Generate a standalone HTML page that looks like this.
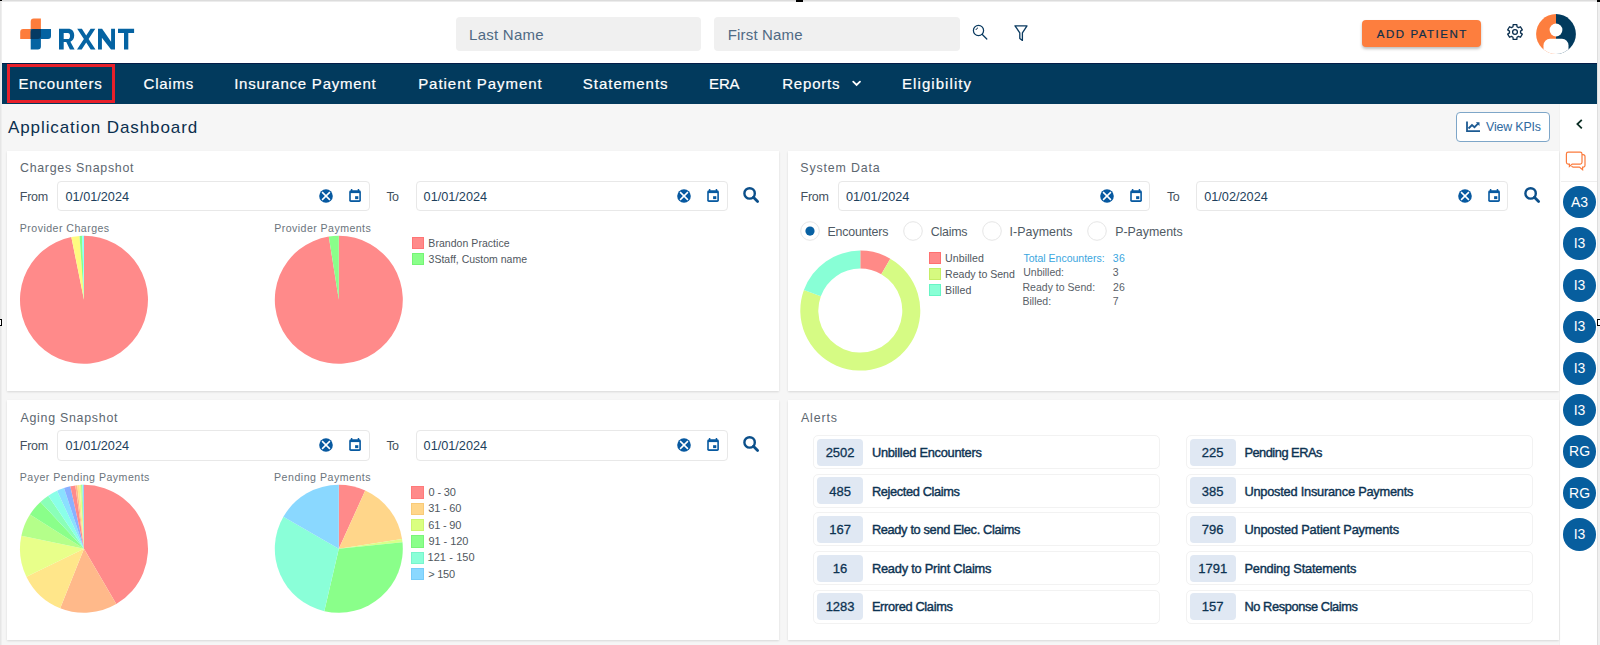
<!DOCTYPE html><html><head><meta charset="utf-8"><style>
html,body{margin:0;padding:0;width:1600px;height:645px;overflow:hidden;background:#f6f6f6;font-family:"Liberation Sans",sans-serif;}
.t{position:absolute;white-space:nowrap;}
</style></head><body>
<div style="position:absolute;left:0px;top:0px;width:1600px;height:63px;background:#fff"></div>
<div style="position:absolute;left:2px;top:63px;width:1595px;height:41px;background:#023a5d"></div>
<div style="position:absolute;left:2px;top:63px;width:1595px;height:1px;background:#031c48"></div>
<div style="position:absolute;left:1559px;top:104px;width:38px;height:541px;background:#fff;border-left:1px solid #f2f2f2;box-sizing:border-box"></div>
<div style="position:absolute;left:0px;top:0px;width:1600px;height:1px;background:#dcdcdc"></div>
<div style="position:absolute;left:0px;top:1px;width:1600px;height:1px;background:#ececec"></div>
<div style="position:absolute;left:0px;top:0px;width:1px;height:645px;background:#e6e6e6"></div>
<div style="position:absolute;left:1px;top:0px;width:1px;height:645px;background:#eeeeee"></div>
<div style="position:absolute;left:1597px;top:0px;width:3px;height:645px;background:#efefef"></div>
<div style="position:absolute;left:1597px;top:0px;width:1px;height:645px;background:#dedede"></div>
<svg style="position:absolute;left:18px;top:16px" width="36" height="36" viewBox="0 0 36 36">
<path d="M15.7,2.5 H22.9 V23.1 H2.2 V16.1 a3,3 0 0 1 3,-3 H12.7 V5.5 a3,3 0 0 1 3,-3 z" fill="#fd7c3b"/>
<path d="M12.7,13.1 H33 V20.1 a3,3 0 0 1 -3,3 H22.9 V30.4 a3,3 0 0 1 -3,3 H12.7 z" fill="#0563a2"/>
<path d="M15.7,13.1 H22.9 V20.1 a3,3 0 0 1 -3,3 H12.7 V16.1 a3,3 0 0 1 3,-3 z" fill="#053a63"/>
</svg>
<svg style="position:absolute;left:56px;top:26px" width="82" height="26" viewBox="0 0 82 26"><path fill-rule="evenodd" fill="#0563a2" d="M3.0,2.8 H12.0 C16.0,2.8 18.2,5.4 18.2,9.6 C18.2,12.9 16.6,15.0 14.4,15.8 L18.6,23.6 H13.9 L10.3,16.1 H7.7 V23.6 H3.0 Z M7.7,7.0 V13.1 H11.9 C13.3,13.1 14.0,11.9 14.0,10.0 C14.0,8.1 13.3,7.0 11.9,7.0 Z"/><path fill="#0563a2" d="M21.2,2.8 H25.9 L30.2,9.6 L34.6,2.8 H39.3 L32.6,13.0 L39.5,23.6 H34.7 L30.2,16.6 L25.7,23.6 H21.0 L27.9,13.0 Z"/><path fill="#0563a2" d="M42,2.8 H46.1 L55.1,15.7 V2.8 H59 V23.6 H55.0 L45.9,11.7 V23.6 H42 Z"/><path fill="#0563a2" d="M62,2.8 H78.1 V6.9 H72.3 V23.6 H68 V6.9 H62 Z"/></svg>
<div style="position:absolute;left:456px;top:16.7px;width:245px;height:34.7px;background:#f0f0f0;border-radius:4px"></div>
<div style="position:absolute;left:714.2px;top:16.7px;width:245.5px;height:34.7px;background:#f0f0f0;border-radius:4px"></div>
<div class="t" style="left:469.08px;top:27.00px;font-size:15px;line-height:15px;color:#4f6a84;letter-spacing:0.250px;">Last Name</div>
<div class="t" style="left:727.72px;top:27.00px;font-size:15px;line-height:15px;color:#4f6a84;letter-spacing:0.174px;">First Name</div>
<svg style="position:absolute;left:968px;top:22px" width="22" height="22" viewBox="0 0 22 22"><circle cx="10.5" cy="8.5" r="5.1" fill="none" stroke="#0a3a60" stroke-width="1.25"/><path d="M14.3,12.5 L18.8,17" stroke="#0a3a60" stroke-width="1.25" stroke-linecap="round"/><path d="M8,7.6 A2.6,2.6 0 0 1 9.6,6" stroke="#0b2f4e" stroke-width="1" fill="none" stroke-linecap="round"/></svg>
<svg style="position:absolute;left:1010px;top:22px" width="22" height="22" viewBox="0 0 22 22"><path d="M5,3.8 h12 l-4.6,7 v7.6 l-2.6,-2 v-5.6 z" fill="none" stroke="#0a3a60" stroke-width="1.3" stroke-linejoin="round"/></svg>
<div style="position:absolute;left:1362.2px;top:20.3px;width:118.7px;height:26.9px;background:#fd7e3e;border-radius:4px;box-shadow:0 2px 3px rgba(0,0,0,0.25)"></div>
<div class="t" style="left:1376.84px;top:29.00px;font-size:11.5px;line-height:11.5px;color:#0e2f4a;letter-spacing:1.519px;-webkit-text-stroke:0.2px #0e2f4a;">ADD PATIENT</div>
<svg style="position:absolute;left:1503.7px;top:21.4px" width="22" height="22" viewBox="0 0 22 22"><path d="M9.16,3.63 L12.84,3.63 L13.01,5.77 L14.52,6.65 L16.47,5.72 L18.31,8.91 L16.53,10.12 L16.53,11.88 L18.31,13.09 L16.47,16.28 L14.52,15.35 L13.01,16.23 L12.84,18.37 L9.16,18.37 L8.99,16.23 L7.48,15.35 L5.53,16.28 L3.69,13.09 L5.47,11.88 L5.47,10.12 L3.69,8.91 L5.53,5.72 L7.48,6.65 L8.99,5.77 Z" fill="none" stroke="#0b2f4e" stroke-width="1.3" stroke-linejoin="round"/><circle cx="11" cy="11" r="2.4" fill="none" stroke="#0b2f4e" stroke-width="1.3"/></svg>
<svg style="position:absolute;left:1535.5px;top:14px" width="40" height="40" viewBox="0 0 40 40"><defs><clipPath id="av"><circle cx="20" cy="20" r="19.9"/></clipPath></defs>
<g clip-path="url(#av)"><rect x="0" y="0" width="20" height="40" fill="#fd7e3e"/><rect x="20" y="0" width="20" height="40" fill="#023a5d"/>
<circle cx="20" cy="16" r="6.4" fill="#fff"/><rect x="7.5" y="24.8" width="25" height="20" rx="6.5" fill="#fff"/></g></svg>
<div class="t" style="left:18.50px;top:76.00px;font-size:15px;line-height:15px;color:#ffffff;letter-spacing:0.822px;-webkit-text-stroke:0.2px #fff;">Encounters</div>
<div class="t" style="left:143.60px;top:76.00px;font-size:15px;line-height:15px;color:#ffffff;letter-spacing:0.740px;-webkit-text-stroke:0.2px #fff;">Claims</div>
<div class="t" style="left:234.14px;top:76.00px;font-size:15px;line-height:15px;color:#ffffff;letter-spacing:0.769px;-webkit-text-stroke:0.2px #fff;">Insurance Payment</div>
<div class="t" style="left:418.14px;top:76.00px;font-size:15px;line-height:15px;color:#ffffff;letter-spacing:0.964px;-webkit-text-stroke:0.2px #fff;">Patient Payment</div>
<div class="t" style="left:582.78px;top:76.00px;font-size:15px;line-height:15px;color:#ffffff;letter-spacing:0.989px;-webkit-text-stroke:0.2px #fff;">Statements</div>
<div class="t" style="left:709.08px;top:76.00px;font-size:15px;line-height:15px;color:#ffffff;letter-spacing:-0.200px;-webkit-text-stroke:0.2px #fff;">ERA</div>
<div class="t" style="left:782.22px;top:76.00px;font-size:15px;line-height:15px;color:#ffffff;letter-spacing:0.800px;-webkit-text-stroke:0.2px #fff;">Reports</div>
<div class="t" style="left:902.04px;top:76.00px;font-size:15px;line-height:15px;color:#ffffff;letter-spacing:1.065px;-webkit-text-stroke:0.2px #fff;">Eligibility</div>
<svg style="position:absolute;left:848px;top:76px" width="18" height="14" viewBox="0 0 18 14"><path d="M5.2,5.6 L8.6,9 L12,5.6" fill="none" stroke="#fff" stroke-width="1.8" stroke-linecap="round"/></svg>
<div style="position:absolute;left:7px;top:64.3px;width:107.8px;height:38.3px;border:3px solid #e8202a;box-sizing:border-box"></div>
<div class="t" style="left:8.00px;top:119.00px;font-size:17px;line-height:17px;color:#0b2f4e;letter-spacing:0.908px;">Application Dashboard</div>
<div style="position:absolute;left:1456.1px;top:112.4px;width:94.3px;height:29.2px;background:#fff;border:1px solid #7ea6c8;border-radius:4px;box-sizing:border-box"></div>
<svg style="position:absolute;left:1464px;top:119px" width="18" height="15" viewBox="0 0 18 15"><path d="M3,2.5 V12.2 H16" fill="none" stroke="#1c5a92" stroke-width="1.8"/><path d="M4.5,9.5 L8,6 L10.5,8.2 L14.5,4.2" fill="none" stroke="#1c5a92" stroke-width="1.8"/><path d="M11.8,3.2 H15.5 V6.9 Z" fill="#1c5a92"/></svg>
<div class="t" style="left:1486.08px;top:121.00px;font-size:12.4px;line-height:12.4px;color:#2f6aa0;letter-spacing:-0.162px;">View KPIs</div>
<svg style="position:absolute;left:1572px;top:116px" width="14" height="16" viewBox="0 0 14 16"><path d="M9.8,3.8 L5.4,8.1 L9.8,12.4" fill="none" stroke="#0d2f25" stroke-width="1.8"/></svg>
<svg style="position:absolute;left:1563px;top:149px" width="26" height="25" viewBox="0 0 26 25"><path d="M5.2,3.2 h12 a1.8,1.8 0 0 1 1.8,1.8 v8.3 a1.8,1.8 0 0 1 -1.8,1.8 h-8 l-2.8,2.4 v-2.4 h-1.2 a1.8,1.8 0 0 1 -1.8,-1.8 v-8.3 a1.8,1.8 0 0 1 1.8,-1.8 z" fill="none" stroke="#fb7b3d" stroke-width="1.2"/><path d="M19,5.7 h1.2 a1.8,1.8 0 0 1 1.8,1.8 v8.8 a1.8,1.8 0 0 1 -1.8,1.8 h-0.6 v2.6 l-3.2,-2.6 h-6.2 a1.8,1.8 0 0 1 -1.6,-1.1" fill="none" stroke="#fb7b3d" stroke-width="1.2"/></svg>
<div style="position:absolute;left:1561px;top:180.5px;width:36px;height:1px;background:#eeeeee"></div>
<div style="position:absolute;left:1563.3px;top:185.85px;width:32.5px;height:32.5px;background:#075e9e;border-radius:50%"></div>
<div class="t" style="left:1563.3px;width:32.5px;text-align:center;top:194.6px;font-size:14px;line-height:15px;color:#fff">A3</div>
<div style="position:absolute;left:1563.3px;top:227.43px;width:32.5px;height:32.5px;background:#075e9e;border-radius:50%"></div>
<div class="t" style="left:1563.3px;width:32.5px;text-align:center;top:236.2px;font-size:14px;line-height:15px;color:#fff">I3</div>
<div style="position:absolute;left:1563.3px;top:269.01px;width:32.5px;height:32.5px;background:#075e9e;border-radius:50%"></div>
<div class="t" style="left:1563.3px;width:32.5px;text-align:center;top:277.8px;font-size:14px;line-height:15px;color:#fff">I3</div>
<div style="position:absolute;left:1563.3px;top:310.59px;width:32.5px;height:32.5px;background:#075e9e;border-radius:50%"></div>
<div class="t" style="left:1563.3px;width:32.5px;text-align:center;top:319.3px;font-size:14px;line-height:15px;color:#fff">I3</div>
<div style="position:absolute;left:1563.3px;top:352.17px;width:32.5px;height:32.5px;background:#075e9e;border-radius:50%"></div>
<div class="t" style="left:1563.3px;width:32.5px;text-align:center;top:360.9px;font-size:14px;line-height:15px;color:#fff">I3</div>
<div style="position:absolute;left:1563.3px;top:393.75px;width:32.5px;height:32.5px;background:#075e9e;border-radius:50%"></div>
<div class="t" style="left:1563.3px;width:32.5px;text-align:center;top:402.5px;font-size:14px;line-height:15px;color:#fff">I3</div>
<div style="position:absolute;left:1563.3px;top:435.33px;width:32.5px;height:32.5px;background:#075e9e;border-radius:50%"></div>
<div class="t" style="left:1563.3px;width:32.5px;text-align:center;top:444.1px;font-size:14px;line-height:15px;color:#fff">RG</div>
<div style="position:absolute;left:1563.3px;top:476.91px;width:32.5px;height:32.5px;background:#075e9e;border-radius:50%"></div>
<div class="t" style="left:1563.3px;width:32.5px;text-align:center;top:485.7px;font-size:14px;line-height:15px;color:#fff">RG</div>
<div style="position:absolute;left:1563.3px;top:518.49px;width:32.5px;height:32.5px;background:#075e9e;border-radius:50%"></div>
<div class="t" style="left:1563.3px;width:32.5px;text-align:center;top:527.2px;font-size:14px;line-height:15px;color:#fff">I3</div>
<div style="position:absolute;left:796px;top:0px;width:7px;height:2px;background:#000"></div>
<div style="position:absolute;left:0px;top:0px;width:2px;height:1px;background:#000"></div>
<div style="position:absolute;left:1597px;top:0px;width:3px;height:2px;background:#000"></div>
<div style="position:absolute;left:0px;top:319px;width:2px;height:7px;border:1px solid #000;border-left:none;background:#fff;box-sizing:border-box"></div>
<div style="position:absolute;left:1597px;top:319px;width:3px;height:7px;border:1.5px solid #000;border-right:none;background:#fff;box-sizing:border-box"></div>
<div style="position:absolute;left:6.8px;top:150.7px;width:772.3px;height:240.6px;background:#fff;box-shadow:0 1px 2px rgba(0,0,0,0.12)"></div>
<div style="position:absolute;left:787.8px;top:150.7px;width:770.8px;height:240.6px;background:#fff;box-shadow:0 1px 2px rgba(0,0,0,0.12)"></div>
<div style="position:absolute;left:6.8px;top:400px;width:772.3px;height:240px;background:#fff;box-shadow:0 1px 2px rgba(0,0,0,0.12)"></div>
<div style="position:absolute;left:787.8px;top:400px;width:770.8px;height:240px;background:#fff;box-shadow:0 1px 2px rgba(0,0,0,0.12)"></div>
<div class="t" style="left:19.98px;top:162.00px;font-size:12.4px;line-height:12.4px;color:#5d6770;letter-spacing:0.725px;">Charges Snapshot</div>
<div class="t" style="left:19.78px;top:191.00px;font-size:12.5px;line-height:12.5px;color:#44515e;letter-spacing:-0.242px;">From</div>
<div style="position:absolute;left:57.4px;top:181.1px;width:312.2px;height:29.7px;border:1px solid #e8e8e8;border-radius:4px;box-sizing:border-box;background:#fff"></div>
<div class="t" style="left:65.52px;top:191.00px;font-size:12.7px;line-height:12.7px;color:#1e3f5c;letter-spacing:-0.002px;">01/01/2024</div>
<svg style="position:absolute;left:318.1px;top:187.75px" width="16" height="16" viewBox="0 0 16 16"><circle cx="8" cy="8" r="6.8" fill="#0759a0"/><path d="M4.1,4.1 L11.9,11.9 M11.9,4.1 L4.1,11.9" stroke="#fff" stroke-width="1.5"/></svg>
<svg style="position:absolute;left:349.2px;top:188.9px" width="13" height="13" viewBox="0 0 13 13"><rect x="0.2" y="1.3" width="11.7" height="11.6" rx="1.6" fill="#0759a0"/><rect x="1.8" y="4.1" width="8.5" height="7.1" fill="#fff"/><rect x="6.1" y="7.2" width="3.2" height="2.9" fill="#0759a0"/><rect x="1.9" y="0" width="1.5" height="2" rx="0.5" fill="#0759a0"/><rect x="8.7" y="0" width="1.5" height="2" rx="0.5" fill="#0759a0"/></svg>
<div style="position:absolute;left:415.6px;top:181.1px;width:312.2px;height:29.7px;border:1px solid #e8e8e8;border-radius:4px;box-sizing:border-box;background:#fff"></div>
<div class="t" style="left:423.58px;top:191.00px;font-size:12.7px;line-height:12.7px;color:#1e3f5c;letter-spacing:-0.002px;">01/01/2024</div>
<svg style="position:absolute;left:676.3000000000001px;top:187.75px" width="16" height="16" viewBox="0 0 16 16"><circle cx="8" cy="8" r="6.8" fill="#0759a0"/><path d="M4.1,4.1 L11.9,11.9 M11.9,4.1 L4.1,11.9" stroke="#fff" stroke-width="1.5"/></svg>
<svg style="position:absolute;left:707.4000000000001px;top:188.9px" width="13" height="13" viewBox="0 0 13 13"><rect x="0.2" y="1.3" width="11.7" height="11.6" rx="1.6" fill="#0759a0"/><rect x="1.8" y="4.1" width="8.5" height="7.1" fill="#fff"/><rect x="6.1" y="7.2" width="3.2" height="2.9" fill="#0759a0"/><rect x="1.9" y="0" width="1.5" height="2" rx="0.5" fill="#0759a0"/><rect x="8.7" y="0" width="1.5" height="2" rx="0.5" fill="#0759a0"/></svg>
<div class="t" style="left:386.55px;top:191.00px;font-size:12.5px;line-height:12.5px;color:#44515e;letter-spacing:-0.800px;">To</div>
<svg style="position:absolute;left:742.4px;top:186px" width="19" height="18" viewBox="0 0 19 18"><circle cx="7.6" cy="7.4" r="5.2" fill="none" stroke="#0b4f8a" stroke-width="2.4"/><path d="M11.4,11.2 L15.6,15.4" stroke="#0b4f8a" stroke-width="2.8" stroke-linecap="round"/></svg>
<div class="t" style="left:19.80px;top:223.00px;font-size:10.6px;line-height:10.6px;color:#6b747c;letter-spacing:0.462px;">Provider Charges</div>
<div class="t" style="left:274.30px;top:223.00px;font-size:10.6px;line-height:10.6px;color:#6b747c;letter-spacing:0.433px;">Provider Payments</div>
<svg style="position:absolute;left:19px;top:235px" width="130" height="130" viewBox="0 0 130 130"><path d="M65.00,64.80 L65.00,0.80 A64,64 0 1 1 52.35,2.06 Z" fill="#ff8a8a"/><path d="M65.00,64.80 L52.35,2.06 A64,64 0 0 1 60.54,0.96 Z" fill="#fffb80"/><path d="M65.00,64.80 L60.54,0.96 A64,64 0 0 1 63.21,0.82 Z" fill="#88ff88"/><path d="M65.00,64.80 L63.21,0.82 A64,64 0 0 1 65.00,0.80 Z" fill="#88ffff"/></svg>
<svg style="position:absolute;left:274px;top:235px" width="130" height="130" viewBox="0 0 130 130"><path d="M64.80,64.80 L64.80,0.80 A64,64 0 1 1 54.79,1.59 Z" fill="#ff8a8a"/><path d="M64.80,64.80 L54.79,1.59 A64,64 0 0 1 64.80,0.80 Z" fill="#8aff8a"/></svg>
<div style="position:absolute;left:411.5px;top:237px;width:12.5px;height:12.4px;background:#ff8a8a;border:1px solid #ff7575;box-sizing:border-box"></div>
<div style="position:absolute;left:411.5px;top:252.9px;width:12.5px;height:12.4px;background:#8aff8a;border:1px solid #75f575;box-sizing:border-box"></div>
<div class="t" style="left:428.35px;top:238.00px;font-size:10.5px;line-height:10.5px;color:#50575e;letter-spacing:0.048px;">Brandon Practice</div>
<div class="t" style="left:428.55px;top:254.00px;font-size:10.5px;line-height:10.5px;color:#50575e;letter-spacing:0.001px;">3Staff, Custom name</div>
<div class="t" style="left:800.30px;top:162.00px;font-size:12.4px;line-height:12.4px;color:#5d6770;letter-spacing:0.843px;">System Data</div>
<div class="t" style="left:800.44px;top:191.00px;font-size:12.5px;line-height:12.5px;color:#44515e;letter-spacing:-0.192px;">From</div>
<div style="position:absolute;left:838.0px;top:181.1px;width:312.2px;height:29.7px;border:1px solid #e8e8e8;border-radius:4px;box-sizing:border-box;background:#fff"></div>
<div class="t" style="left:846.00px;top:191.00px;font-size:12.7px;line-height:12.7px;color:#1e3f5c;letter-spacing:-0.020px;">01/01/2024</div>
<svg style="position:absolute;left:1098.7px;top:187.75px" width="16" height="16" viewBox="0 0 16 16"><circle cx="8" cy="8" r="6.8" fill="#0759a0"/><path d="M4.1,4.1 L11.9,11.9 M11.9,4.1 L4.1,11.9" stroke="#fff" stroke-width="1.5"/></svg>
<svg style="position:absolute;left:1129.8px;top:188.9px" width="13" height="13" viewBox="0 0 13 13"><rect x="0.2" y="1.3" width="11.7" height="11.6" rx="1.6" fill="#0759a0"/><rect x="1.8" y="4.1" width="8.5" height="7.1" fill="#fff"/><rect x="6.1" y="7.2" width="3.2" height="2.9" fill="#0759a0"/><rect x="1.9" y="0" width="1.5" height="2" rx="0.5" fill="#0759a0"/><rect x="8.7" y="0" width="1.5" height="2" rx="0.5" fill="#0759a0"/></svg>
<div style="position:absolute;left:1196.2px;top:181.1px;width:312.2px;height:29.7px;border:1px solid #e8e8e8;border-radius:4px;box-sizing:border-box;background:#fff"></div>
<div class="t" style="left:1204.14px;top:191.00px;font-size:12.7px;line-height:12.7px;color:#1e3f5c;letter-spacing:0.024px;">01/02/2024</div>
<svg style="position:absolute;left:1456.9px;top:187.75px" width="16" height="16" viewBox="0 0 16 16"><circle cx="8" cy="8" r="6.8" fill="#0759a0"/><path d="M4.1,4.1 L11.9,11.9 M11.9,4.1 L4.1,11.9" stroke="#fff" stroke-width="1.5"/></svg>
<svg style="position:absolute;left:1488.0px;top:188.9px" width="13" height="13" viewBox="0 0 13 13"><rect x="0.2" y="1.3" width="11.7" height="11.6" rx="1.6" fill="#0759a0"/><rect x="1.8" y="4.1" width="8.5" height="7.1" fill="#fff"/><rect x="6.1" y="7.2" width="3.2" height="2.9" fill="#0759a0"/><rect x="1.9" y="0" width="1.5" height="2" rx="0.5" fill="#0759a0"/><rect x="8.7" y="0" width="1.5" height="2" rx="0.5" fill="#0759a0"/></svg>
<div class="t" style="left:1166.99px;top:191.00px;font-size:12.5px;line-height:12.5px;color:#44515e;letter-spacing:-0.420px;">To</div>
<svg style="position:absolute;left:1523.0px;top:186px" width="19" height="18" viewBox="0 0 19 18"><circle cx="7.6" cy="7.4" r="5.2" fill="none" stroke="#0b4f8a" stroke-width="2.4"/><path d="M11.4,11.2 L15.6,15.4" stroke="#0b4f8a" stroke-width="2.8" stroke-linecap="round"/></svg>
<svg style="position:absolute;left:798.7px;top:220px" width="22" height="22" viewBox="0 0 22 22"><circle cx="11" cy="11" r="9.3" fill="#fff" stroke="#e6e6e6" stroke-width="1"/><circle cx="11" cy="11.1" r="4.6" fill="#0861a3"/></svg>
<div class="t" style="left:827.40px;top:226.00px;font-size:12.4px;line-height:12.4px;color:#4f5a64;letter-spacing:-0.183px;">Encounters</div>
<svg style="position:absolute;left:901.7px;top:220px" width="22" height="22" viewBox="0 0 22 22"><circle cx="11" cy="11" r="9.3" fill="#fff" stroke="#e6e6e6" stroke-width="1"/></svg>
<div class="t" style="left:930.70px;top:226.00px;font-size:12.4px;line-height:12.4px;color:#4f5a64;letter-spacing:-0.209px;">Claims</div>
<svg style="position:absolute;left:981.2px;top:220px" width="22" height="22" viewBox="0 0 22 22"><circle cx="11" cy="11" r="9.3" fill="#fff" stroke="#e6e6e6" stroke-width="1"/></svg>
<div class="t" style="left:1009.60px;top:226.00px;font-size:12.4px;line-height:12.4px;color:#4f5a64;letter-spacing:0.028px;">I-Payments</div>
<svg style="position:absolute;left:1086.1px;top:220px" width="22" height="22" viewBox="0 0 22 22"><circle cx="11" cy="11" r="9.3" fill="#fff" stroke="#e6e6e6" stroke-width="1"/></svg>
<div class="t" style="left:1115.20px;top:226.00px;font-size:12.4px;line-height:12.4px;color:#4f5a64;letter-spacing:0.002px;">P-Payments</div>
<svg style="position:absolute;left:799px;top:249px" width="123" height="123" viewBox="0 0 123 123"><path d="M61.30,1.60 A60,60 0 0 1 91.30,9.64 L82.30,25.23 A42,42 0 0 0 61.30,19.60 Z" fill="#ff8a87"/><path d="M91.30,9.64 A60,60 0 1 1 4.92,41.08 L21.83,47.24 A42,42 0 1 0 82.30,25.23 Z" fill="#d6fb84"/><path d="M4.92,41.08 A60,60 0 0 1 61.30,1.60 L61.30,19.60 A42,42 0 0 0 21.83,47.24 Z" fill="#88ffd6"/></svg>
<div style="position:absolute;left:928.9px;top:252px;width:12.2px;height:12.3px;background:#ff8a8a;border:1px solid #ff7070;box-sizing:border-box"></div>
<div style="position:absolute;left:928.9px;top:268px;width:12.2px;height:12.3px;background:#d6fa80;border:1px solid #c6ee66;box-sizing:border-box"></div>
<div style="position:absolute;left:928.9px;top:284px;width:12.2px;height:12.3px;background:#88ffd5;border:1px solid #66f5c5;box-sizing:border-box"></div>
<div class="t" style="left:945.04px;top:253.00px;font-size:10.6px;line-height:10.6px;color:#50575e;letter-spacing:0.085px;">Unbilled</div>
<div class="t" style="left:945.04px;top:269.00px;font-size:10.6px;line-height:10.6px;color:#50575e;letter-spacing:-0.021px;">Ready to Send</div>
<div class="t" style="left:945.04px;top:285.00px;font-size:10.6px;line-height:10.6px;color:#50575e;letter-spacing:0.106px;">Billed</div>
<div class="t" style="left:1023.52px;top:253.00px;font-size:10.5px;line-height:10.5px;color:#3aa6e0;letter-spacing:-0.005px;">Total Encounters:</div>
<div class="t" style="left:1112.76px;top:253.00px;font-size:10.5px;line-height:10.5px;color:#3aa6e0;letter-spacing:0.405px;">36</div>
<div class="t" style="left:1023.32px;top:267.00px;font-size:10.5px;line-height:10.5px;color:#5a6168;letter-spacing:-0.031px;">Unbilled:</div>
<div class="t" style="left:1112.76px;top:267.00px;font-size:10.5px;line-height:10.5px;color:#5a6168;letter-spacing:0.000px;">3</div>
<div class="t" style="left:1022.52px;top:282.00px;font-size:10.5px;line-height:10.5px;color:#5a6168;letter-spacing:0.012px;">Ready to Send:</div>
<div class="t" style="left:1113.06px;top:282.00px;font-size:10.5px;line-height:10.5px;color:#5a6168;letter-spacing:0.105px;">26</div>
<div class="t" style="left:1022.52px;top:296.00px;font-size:10.5px;line-height:10.5px;color:#5a6168;letter-spacing:-0.010px;">Billed:</div>
<div class="t" style="left:1112.76px;top:296.00px;font-size:10.5px;line-height:10.5px;color:#5a6168;letter-spacing:0.000px;">7</div>
<div class="t" style="left:20.48px;top:412.00px;font-size:12.4px;line-height:12.4px;color:#5d6770;letter-spacing:0.730px;">Aging Snapshot</div>
<div class="t" style="left:19.78px;top:440.00px;font-size:12.5px;line-height:12.5px;color:#44515e;letter-spacing:-0.242px;">From</div>
<div style="position:absolute;left:57.4px;top:430.1px;width:312.2px;height:30.6px;border:1px solid #e8e8e8;border-radius:4px;box-sizing:border-box;background:#fff"></div>
<div class="t" style="left:65.52px;top:440.00px;font-size:12.7px;line-height:12.7px;color:#1e3f5c;letter-spacing:-0.002px;">01/01/2024</div>
<svg style="position:absolute;left:318.1px;top:437.05px" width="16" height="16" viewBox="0 0 16 16"><circle cx="8" cy="8" r="6.8" fill="#0759a0"/><path d="M4.1,4.1 L11.9,11.9 M11.9,4.1 L4.1,11.9" stroke="#fff" stroke-width="1.5"/></svg>
<svg style="position:absolute;left:349.2px;top:438.20000000000005px" width="13" height="13" viewBox="0 0 13 13"><rect x="0.2" y="1.3" width="11.7" height="11.6" rx="1.6" fill="#0759a0"/><rect x="1.8" y="4.1" width="8.5" height="7.1" fill="#fff"/><rect x="6.1" y="7.2" width="3.2" height="2.9" fill="#0759a0"/><rect x="1.9" y="0" width="1.5" height="2" rx="0.5" fill="#0759a0"/><rect x="8.7" y="0" width="1.5" height="2" rx="0.5" fill="#0759a0"/></svg>
<div style="position:absolute;left:415.6px;top:430.1px;width:312.2px;height:30.6px;border:1px solid #e8e8e8;border-radius:4px;box-sizing:border-box;background:#fff"></div>
<div class="t" style="left:423.58px;top:440.00px;font-size:12.7px;line-height:12.7px;color:#1e3f5c;letter-spacing:-0.002px;">01/01/2024</div>
<svg style="position:absolute;left:676.3000000000001px;top:437.05px" width="16" height="16" viewBox="0 0 16 16"><circle cx="8" cy="8" r="6.8" fill="#0759a0"/><path d="M4.1,4.1 L11.9,11.9 M11.9,4.1 L4.1,11.9" stroke="#fff" stroke-width="1.5"/></svg>
<svg style="position:absolute;left:707.4000000000001px;top:438.20000000000005px" width="13" height="13" viewBox="0 0 13 13"><rect x="0.2" y="1.3" width="11.7" height="11.6" rx="1.6" fill="#0759a0"/><rect x="1.8" y="4.1" width="8.5" height="7.1" fill="#fff"/><rect x="6.1" y="7.2" width="3.2" height="2.9" fill="#0759a0"/><rect x="1.9" y="0" width="1.5" height="2" rx="0.5" fill="#0759a0"/><rect x="8.7" y="0" width="1.5" height="2" rx="0.5" fill="#0759a0"/></svg>
<div class="t" style="left:386.55px;top:440.00px;font-size:12.5px;line-height:12.5px;color:#44515e;letter-spacing:-0.800px;">To</div>
<svg style="position:absolute;left:742.4px;top:435.3px" width="19" height="18" viewBox="0 0 19 18"><circle cx="7.6" cy="7.4" r="5.2" fill="none" stroke="#0b4f8a" stroke-width="2.4"/><path d="M11.4,11.2 L15.6,15.4" stroke="#0b4f8a" stroke-width="2.8" stroke-linecap="round"/></svg>
<div class="t" style="left:19.78px;top:472.00px;font-size:10.6px;line-height:10.6px;color:#6b747c;letter-spacing:0.478px;">Payer Pending Payments</div>
<div class="t" style="left:274.04px;top:472.00px;font-size:10.6px;line-height:10.6px;color:#6b747c;letter-spacing:0.511px;">Pending Payments</div>
<svg style="position:absolute;left:19px;top:484px" width="130" height="130" viewBox="0 0 130 130"><path d="M65.00,64.80 L65.00,0.80 A64,64 0 0 1 97.29,120.06 Z" fill="#ff8a8a"/><path d="M65.00,64.80 L97.29,120.06 A64,64 0 0 1 41.23,124.22 Z" fill="#ffb98a"/><path d="M65.00,64.80 L41.23,124.22 A64,64 0 0 1 7.38,92.65 Z" fill="#ffe68a"/><path d="M65.00,64.80 L7.38,92.65 A64,64 0 0 1 2.35,51.71 Z" fill="#e8ff8a"/><path d="M65.00,64.80 L2.35,51.71 A64,64 0 0 1 10.96,30.51 Z" fill="#b4ff8a"/><path d="M65.00,64.80 L10.96,30.51 A64,64 0 0 1 21.43,17.92 Z" fill="#8aff8a"/><path d="M65.00,64.80 L21.43,17.92 A64,64 0 0 1 29.30,11.68 Z" fill="#8affb8"/><path d="M65.00,64.80 L29.30,11.68 A64,64 0 0 1 38.05,6.75 Z" fill="#8affe8"/><path d="M65.00,64.80 L38.05,6.75 A64,64 0 0 1 45.01,4.00 Z" fill="#8ae0ff"/><path d="M65.00,64.80 L45.01,4.00 A64,64 0 0 1 51.37,2.27 Z" fill="#8ab0ff"/><path d="M65.00,64.80 L51.37,2.27 A64,64 0 0 1 56.31,1.39 Z" fill="#ff8a8a"/><path d="M65.00,64.80 L56.31,1.39 A64,64 0 0 1 58.31,1.15 Z" fill="#ffb98a"/><path d="M65.00,64.80 L58.31,1.15 A64,64 0 0 1 60.54,0.96 Z" fill="#ffe68a"/><path d="M65.00,64.80 L60.54,0.96 A64,64 0 0 1 62.21,0.86 Z" fill="#e8ff8a"/><path d="M65.00,64.80 L62.21,0.86 A64,64 0 0 1 63.32,0.82 Z" fill="#8aff8a"/><path d="M65.00,64.80 L63.32,0.82 A64,64 0 0 1 64.22,0.80 Z" fill="#8affe8"/><path d="M65.00,64.80 L64.22,0.80 A64,64 0 0 1 65.00,0.80 Z" fill="#8ab0ff"/></svg>
<svg style="position:absolute;left:274px;top:484px" width="130" height="130" viewBox="0 0 130 130"><path d="M64.80,64.80 L64.80,0.80 A64,64 0 0 1 91.24,6.52 Z" fill="#ff8a8a"/><path d="M64.80,64.80 L91.24,6.52 A64,64 0 0 1 128.05,55.01 Z" fill="#ffd68a"/><path d="M64.80,64.80 L128.05,55.01 A64,64 0 0 1 128.47,58.33 Z" fill="#daff8a"/><path d="M64.80,64.80 L128.47,58.33 A64,64 0 0 1 50.29,127.13 Z" fill="#8aff8a"/><path d="M64.80,64.80 L50.29,127.13 A64,64 0 0 1 9.37,32.80 Z" fill="#8affd8"/><path d="M64.80,64.80 L9.37,32.80 A64,64 0 0 1 64.80,0.80 Z" fill="#8ad8ff"/></svg>
<div style="position:absolute;left:411.3px;top:486.2px;width:12.7px;height:12.5px;background:#ff8a8a;border:1px solid #ff7a7a;box-sizing:border-box"></div>
<div class="t" style="left:428.46px;top:487.00px;font-size:11px;line-height:11px;color:#50575e;letter-spacing:-0.124px;">0 - 30</div>
<div style="position:absolute;left:411.3px;top:502.55px;width:12.7px;height:12.5px;background:#ffd68a;border:1px solid #f8ca78;box-sizing:border-box"></div>
<div class="t" style="left:428.26px;top:503.00px;font-size:11px;line-height:11px;color:#50575e;letter-spacing:-0.198px;">31 - 60</div>
<div style="position:absolute;left:411.3px;top:518.9px;width:12.7px;height:12.5px;background:#daff80;border:1px solid #cdf570;box-sizing:border-box"></div>
<div class="t" style="left:428.26px;top:520.00px;font-size:11px;line-height:11px;color:#50575e;letter-spacing:-0.198px;">61 - 90</div>
<div style="position:absolute;left:411.3px;top:535.25px;width:12.7px;height:12.5px;background:#8aff8a;border:1px solid #7af57a;box-sizing:border-box"></div>
<div class="t" style="left:428.46px;top:536.00px;font-size:11px;line-height:11px;color:#50575e;letter-spacing:-0.057px;">91 - 120</div>
<div style="position:absolute;left:411.3px;top:551.6px;width:12.7px;height:12.5px;background:#8affd8;border:1px solid #78f5cc;box-sizing:border-box"></div>
<div class="t" style="left:427.46px;top:552.00px;font-size:11px;line-height:11px;color:#50575e;letter-spacing:0.091px;">121 - 150</div>
<div style="position:absolute;left:411.3px;top:567.95px;width:12.7px;height:12.5px;background:#8ad8ff;border:1px solid #78ccf8;box-sizing:border-box"></div>
<div class="t" style="left:428.26px;top:569.00px;font-size:11px;line-height:11px;color:#50575e;letter-spacing:-0.272px;">> 150</div>
<div class="t" style="left:800.94px;top:412.00px;font-size:12.4px;line-height:12.4px;color:#5d6770;letter-spacing:0.851px;">Alerts</div>
<div style="position:absolute;left:813.4px;top:435.0px;width:346.5px;height:34px;border:1px solid #f2f2f2;border-radius:5px;box-sizing:border-box;background:#fff"></div>
<div style="position:absolute;left:817.0px;top:438.7px;width:46.2px;height:27px;background:#e0e8f3;border-radius:4px"></div>
<div class="t" style="left:817.0px;width:46.2px;text-align:center;top:446.10px;font-size:13px;line-height:13px;color:#0d3352;letter-spacing:0px;-webkit-text-stroke:0.3px #0d3352">2502</div>
<div class="t" style="left:871.92px;top:447.00px;font-size:12.8px;line-height:12.8px;color:#0d3352;letter-spacing:-0.253px;-webkit-text-stroke:0.4px #0d3352;">Unbilled Encounters</div>
<div style="position:absolute;left:813.4px;top:473.65px;width:346.5px;height:34px;border:1px solid #f2f2f2;border-radius:5px;box-sizing:border-box;background:#fff"></div>
<div style="position:absolute;left:817.0px;top:477.34999999999997px;width:46.2px;height:27px;background:#e0e8f3;border-radius:4px"></div>
<div class="t" style="left:817.0px;width:46.2px;text-align:center;top:484.60px;font-size:13px;line-height:13px;color:#0d3352;letter-spacing:0px;-webkit-text-stroke:0.3px #0d3352">485</div>
<div class="t" style="left:871.92px;top:486.00px;font-size:12.8px;line-height:12.8px;color:#0d3352;letter-spacing:-0.370px;-webkit-text-stroke:0.4px #0d3352;">Rejected Claims</div>
<div style="position:absolute;left:813.4px;top:512.3px;width:346.5px;height:34px;border:1px solid #f2f2f2;border-radius:5px;box-sizing:border-box;background:#fff"></div>
<div style="position:absolute;left:817.0px;top:516.0px;width:46.2px;height:27px;background:#e0e8f3;border-radius:4px"></div>
<div class="t" style="left:817.0px;width:46.2px;text-align:center;top:523.10px;font-size:13px;line-height:13px;color:#0d3352;letter-spacing:0px;-webkit-text-stroke:0.3px #0d3352">167</div>
<div class="t" style="left:871.92px;top:524.00px;font-size:12.8px;line-height:12.8px;color:#0d3352;letter-spacing:-0.346px;-webkit-text-stroke:0.4px #0d3352;">Ready to send Elec. Claims</div>
<div style="position:absolute;left:813.4px;top:550.95px;width:346.5px;height:34px;border:1px solid #f2f2f2;border-radius:5px;box-sizing:border-box;background:#fff"></div>
<div style="position:absolute;left:817.0px;top:554.6500000000001px;width:46.2px;height:27px;background:#e0e8f3;border-radius:4px"></div>
<div class="t" style="left:817.0px;width:46.2px;text-align:center;top:561.60px;font-size:13px;line-height:13px;color:#0d3352;letter-spacing:0px;-webkit-text-stroke:0.3px #0d3352">16</div>
<div class="t" style="left:871.92px;top:563.00px;font-size:12.8px;line-height:12.8px;color:#0d3352;letter-spacing:-0.212px;-webkit-text-stroke:0.4px #0d3352;">Ready to Print Claims</div>
<div style="position:absolute;left:813.4px;top:589.6px;width:346.5px;height:34px;border:1px solid #f2f2f2;border-radius:5px;box-sizing:border-box;background:#fff"></div>
<div style="position:absolute;left:817.0px;top:593.3000000000001px;width:46.2px;height:27px;background:#e0e8f3;border-radius:4px"></div>
<div class="t" style="left:817.0px;width:46.2px;text-align:center;top:600.10px;font-size:13px;line-height:13px;color:#0d3352;letter-spacing:0px;-webkit-text-stroke:0.3px #0d3352">1283</div>
<div class="t" style="left:871.92px;top:601.00px;font-size:12.8px;line-height:12.8px;color:#0d3352;letter-spacing:-0.337px;-webkit-text-stroke:0.4px #0d3352;">Errored Claims</div>
<div style="position:absolute;left:1186px;top:435.0px;width:346.5px;height:34px;border:1px solid #f2f2f2;border-radius:5px;box-sizing:border-box;background:#fff"></div>
<div style="position:absolute;left:1189.6px;top:438.7px;width:46.2px;height:27px;background:#e0e8f3;border-radius:4px"></div>
<div class="t" style="left:1189.6px;width:46.2px;text-align:center;top:446.10px;font-size:13px;line-height:13px;color:#0d3352;letter-spacing:0px;-webkit-text-stroke:0.3px #0d3352">225</div>
<div class="t" style="left:1244.38px;top:447.00px;font-size:12.8px;line-height:12.8px;color:#0d3352;letter-spacing:-0.473px;-webkit-text-stroke:0.4px #0d3352;">Pending ERAs</div>
<div style="position:absolute;left:1186px;top:473.65px;width:346.5px;height:34px;border:1px solid #f2f2f2;border-radius:5px;box-sizing:border-box;background:#fff"></div>
<div style="position:absolute;left:1189.6px;top:477.34999999999997px;width:46.2px;height:27px;background:#e0e8f3;border-radius:4px"></div>
<div class="t" style="left:1189.6px;width:46.2px;text-align:center;top:484.60px;font-size:13px;line-height:13px;color:#0d3352;letter-spacing:0px;-webkit-text-stroke:0.3px #0d3352">385</div>
<div class="t" style="left:1244.38px;top:486.00px;font-size:12.8px;line-height:12.8px;color:#0d3352;letter-spacing:-0.227px;-webkit-text-stroke:0.4px #0d3352;">Unposted Insurance Payments</div>
<div style="position:absolute;left:1186px;top:512.3px;width:346.5px;height:34px;border:1px solid #f2f2f2;border-radius:5px;box-sizing:border-box;background:#fff"></div>
<div style="position:absolute;left:1189.6px;top:516.0px;width:46.2px;height:27px;background:#e0e8f3;border-radius:4px"></div>
<div class="t" style="left:1189.6px;width:46.2px;text-align:center;top:523.10px;font-size:13px;line-height:13px;color:#0d3352;letter-spacing:0px;-webkit-text-stroke:0.3px #0d3352">796</div>
<div class="t" style="left:1244.38px;top:524.00px;font-size:12.8px;line-height:12.8px;color:#0d3352;letter-spacing:-0.165px;-webkit-text-stroke:0.4px #0d3352;">Unposted Patient Payments</div>
<div style="position:absolute;left:1186px;top:550.95px;width:346.5px;height:34px;border:1px solid #f2f2f2;border-radius:5px;box-sizing:border-box;background:#fff"></div>
<div style="position:absolute;left:1189.6px;top:554.6500000000001px;width:46.2px;height:27px;background:#e0e8f3;border-radius:4px"></div>
<div class="t" style="left:1189.6px;width:46.2px;text-align:center;top:561.60px;font-size:13px;line-height:13px;color:#0d3352;letter-spacing:0px;-webkit-text-stroke:0.3px #0d3352">1791</div>
<div class="t" style="left:1244.38px;top:563.00px;font-size:12.8px;line-height:12.8px;color:#0d3352;letter-spacing:-0.196px;-webkit-text-stroke:0.4px #0d3352;">Pending Statements</div>
<div style="position:absolute;left:1186px;top:589.6px;width:346.5px;height:34px;border:1px solid #f2f2f2;border-radius:5px;box-sizing:border-box;background:#fff"></div>
<div style="position:absolute;left:1189.6px;top:593.3000000000001px;width:46.2px;height:27px;background:#e0e8f3;border-radius:4px"></div>
<div class="t" style="left:1189.6px;width:46.2px;text-align:center;top:600.10px;font-size:13px;line-height:13px;color:#0d3352;letter-spacing:0px;-webkit-text-stroke:0.3px #0d3352">157</div>
<div class="t" style="left:1244.38px;top:601.00px;font-size:12.8px;line-height:12.8px;color:#0d3352;letter-spacing:-0.391px;-webkit-text-stroke:0.4px #0d3352;">No Response Claims</div>
</body></html>
